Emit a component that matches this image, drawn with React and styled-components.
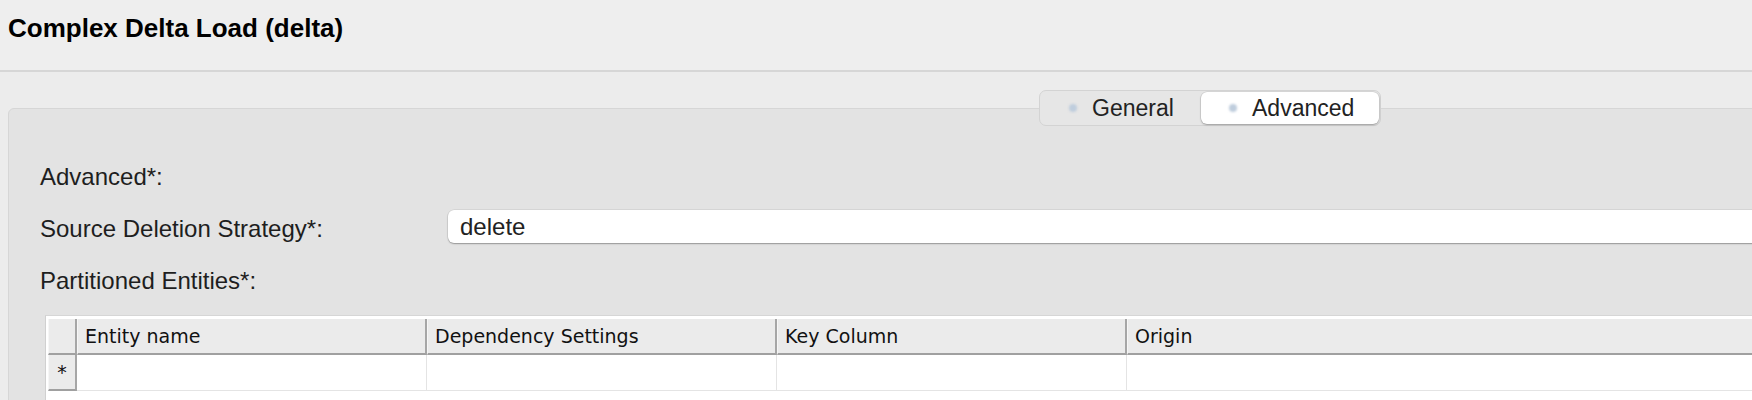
import React from 'react';
import styled, { createGlobalStyle } from 'styled-components';

const GlobalStyle = createGlobalStyle`
  html, body {
    margin: 0;
    padding: 0;
    background: #ececec;
    overflow: hidden;
  }
  body {
    font-family: 'Liberation Sans', Arial, sans-serif;
    color: #1e1e1e;
  }
`;

const Page = styled.div`
  width: 1752px;
  height: 400px;
  overflow: hidden;
  background: #ececec;
`;

const Header = styled.header`
  height: 72px;
  box-sizing: border-box;
  padding: 13px 0 0 8px;
  background: #eeeeee;
  border-bottom: 2px solid #d6d6d6;
`;

const Title = styled.h1`
  margin: 0;
  font-family: 'Liberation Sans', Arial, sans-serif;
  font-weight: bold;
  font-size: 26px;
  line-height: 30px;
  color: #000;
`;

const Content = styled.div`
  padding: 36px 0 0 8px;
`;

/* the tab folder is wider than the window, the tabs sit in its middle */
const Panel = styled.section`
  width: 2404px;
  height: 320px;
  box-sizing: border-box;
  background: #e3e3e3;
  border: 1px solid #d6d6d6;
  border-radius: 6px 6px 0 0;
`;

const TabBar = styled.div`
  display: flex;
  justify-content: center;
  margin-top: -19px;
`;

const TabGroup = styled.div`
  display: flex;
  height: 36px;
  box-sizing: border-box;
  padding: 1px;
  background: #e6e6e6;
  border: 1px solid #d3d3d3;
  border-radius: 7px;
`;

const Tab = styled.div`
  display: flex;
  align-items: center;
  gap: 15px;
  box-sizing: border-box;
  width: ${p => p.$width}px;
  padding-left: 28px;
  font-size: 23px;
  color: #222;
  border-radius: 6px;
  background: ${p => (p.$active ? '#ffffff' : 'transparent')};
  box-shadow: ${p => (p.$active ? '0 1px 2px rgba(0,0,0,0.28), 0 0 0 0.5px rgba(0,0,0,0.12)' : 'none')};
`;

const Dot = styled.span`
  width: 8px;
  height: 8px;
  border-radius: 50%;
  background: #bfcddd;
  filter: blur(1.2px);
`;

const Form = styled.div`
  display: flex;
  flex-direction: column;
  gap: 19px;
  padding: 31px 0 0 31px;
`;

const Row = styled.div`
  display: flex;
  align-items: center;
  height: 33px;
`;

const Label = styled.span`
  width: 408px;
  flex: none;
  padding-top: 6px;
  font-size: 24px;
  color: #1e1e1e;
`;

const Field = styled.div`
  flex: 1;
  height: 33px;
  margin-top: 2px;
  box-sizing: border-box;
  display: flex;
  align-items: center;
  padding-left: 12px;
  background: #fff;
  border-radius: 6px;
  font-size: 24px;
  color: #222;
  box-shadow: 0 1px 1.5px rgba(0, 0, 0, 0.3), 0 0 0 0.5px rgba(0, 0, 0, 0.1);
`;

const TableFrame = styled.div`
  margin: 21px 0 0 36px;
  height: 100px;
  box-sizing: border-box;
  padding: 3px 0 0 2px;
  background: #fff;
  border-top: 1px solid #d6d6d6;
  border-left: 1px solid #d0d0d0;
  font-family: 'DejaVu Sans', Verdana, sans-serif;
  font-size: 19px;
  color: #111;
`;

const Grid = styled.div`
  display: grid;
  grid-template-columns: 29px 350px 350px 350px 1fr;
  grid-template-rows: 36px 36px;
`;

const HeadCell = styled.div`
  display: flex;
  align-items: center;
  box-sizing: border-box;
  padding-left: 7px;
  background: #ebebeb;
  border-right: 2px solid #a6a6a6;
  border-bottom: 2px solid #a0a0a0;
  border-left: 1px solid #f6f6f6;
  white-space: nowrap;
`;

const RowHead = styled(HeadCell)`
  justify-content: center;
  padding-left: 0;
`;

const Cell = styled.div`
  background: #fff;
  border-right: 1px solid #e4e4e4;
  border-bottom: 1px solid #e4e4e4;
`;

const columns = ['Entity name', 'Dependency Settings', 'Key Column', 'Origin'];

export default function App() {
  return (
    <Page>
      <GlobalStyle />
      <Header>
        <Title>Complex Delta Load (delta)</Title>
      </Header>
      <Content>
        <Panel>
          <TabBar>
            <TabGroup>
              <Tab $width={160}>
                <Dot />
                General
              </Tab>
              <Tab $width={178} $active>
                <Dot />
                Advanced
              </Tab>
            </TabGroup>
          </TabBar>
          <Form>
            <Row>
              <Label>Advanced*:</Label>
            </Row>
            <Row>
              <Label>Source Deletion Strategy*:</Label>
              <Field>delete</Field>
            </Row>
            <Row>
              <Label>Partitioned Entities*:</Label>
            </Row>
          </Form>
          <TableFrame>
            <Grid>
              <RowHead />
              {columns.map(c => (
                <HeadCell key={c}>{c}</HeadCell>
              ))}
              <RowHead>*</RowHead>
              {columns.map(c => (
                <Cell key={c} />
              ))}
            </Grid>
          </TableFrame>
        </Panel>
      </Content>
    </Page>
  );
}
